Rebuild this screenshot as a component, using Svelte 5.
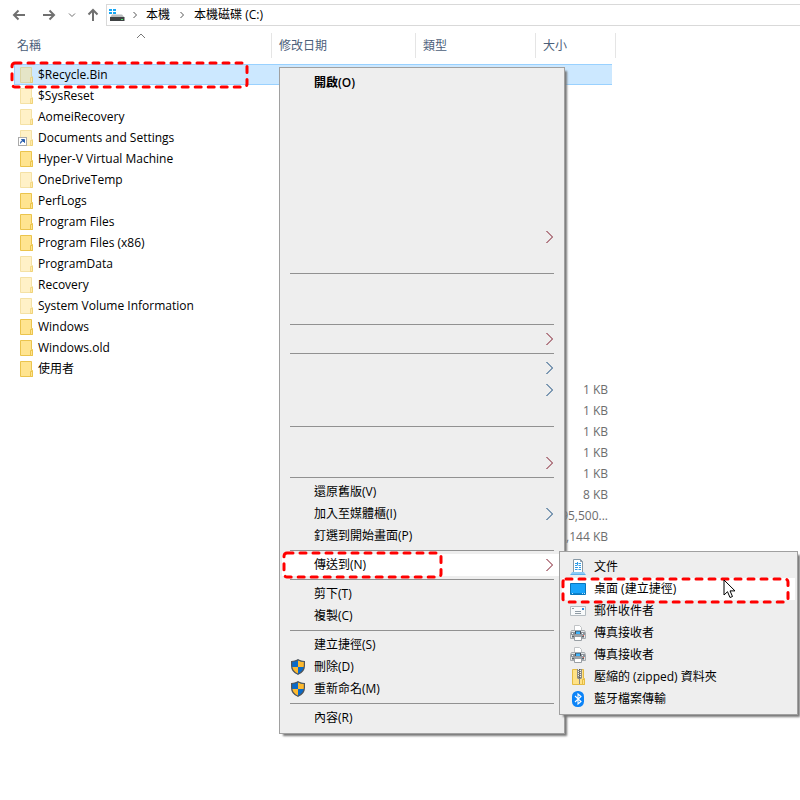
<script>
  const files = [
    ['$Recycle.Bin', 'faded'], ['$SysReset', 'faded'], ['AomeiRecovery', 'faded'],
    ['Documents and Settings', 'faded', true], ['Hyper-V Virtual Machine', ''],
    ['OneDriveTemp', 'faded'], ['PerfLogs', ''], ['Program Files', ''],
    ['Program Files (x86)', ''], ['ProgramData', 'faded'], ['Recovery', 'faded'],
    ['System Volume Information', 'faded'], ['Windows', ''], ['Windows.old', ''], ['使用者', '']
  ];
  const sizes = ['1 KB', '1 KB', '1 KB', '1 KB', '1 KB', '8 KB', '95,500...', '2,144 KB'];

  const blank = (n) => Array.from({ length: n }, () => ({}));
  const groups = [
    [{ label: '開啟(O)', bold: true }, ...blank(6), { arrow: 'red' }, {}],
    blank(2),
    [{ arrow: 'red' }],
    [{ arrow: 'blue' }, { arrow: 'blue' }, {}],
    [{}, { arrow: 'red' }],
    [{ label: '還原舊版(V)' }, { label: '加入至媒體櫃(I)', arrow: 'blue' }, { label: '釘選到開始畫面(P)' }],
    [{ label: '傳送到(N)', arrow: 'red', active: true }],
    [{ label: '剪下(T)' }, { label: '複製(C)' }],
    [{ label: '建立捷徑(S)' }, { label: '刪除(D)', shield: true }, { label: '重新命名(M)', shield: true }],
    [{ label: '內容(R)' }]
  ];
  const targets = [
    ['doc', '文件'], ['desktop', '桌面 (建立捷徑)'], ['mail', '郵件收件者'], ['fax', '傳真接收者'],
    ['fax', '傳真接收者'], ['zip', '壓縮的 (zipped) 資料夾'], ['bluetooth', '藍牙檔案傳輸']
  ];
</script>

{#snippet folder(faded, link)}
  <svg class="folder" class:faded width="18" height="18" viewBox="0 0 18 18" aria-hidden="true">
    <path d="M2.5 1.5h11v9h1v6h-12z" fill="#ffe490" stroke="#ebc44d" />
    <path d="M12.5 16v-4.500h2v5h-2z" fill="#ffe490" stroke="#ebc44d" />
    {#if link}
      <g class="link">
        <rect x=".5" y="8.500" width="8" height="8" fill="#fff" stroke="#aaa" />
        <path d="M2.500 14.500c0-2 1-3 3-3M3.500 10.500h3v3z" fill="#2a5fae" stroke="#2a5fae" />
      </g>
    {/if}
  </svg>
{/snippet}

{#snippet icon(name)}
  <svg width="16" height="16" viewBox="0 0 16 16" aria-hidden="true">
    {#if name === 'shield'}
      <path d="M8 .5c2 1.300 4.300 1.700 6.500 1.800v4.200c0 4.500-2.500 7.300-6.500 9-4-1.700-6.500-4.500-6.500-9V2.300C3.700 2.200 6 1.800 8 .5z" fill="#0a6ac8" />
      <path d="M8 1.200c2 1.200 4 1.600 6 1.700v5H8z" fill="#fdb92e" />
      <path d="M2 8h6v7C4.500 13.500 2.300 11.200 2 8z" fill="#fdb92e" />
      <path d="M8 .8c2 1.200 4.200 1.600 6.400 1.700v4c0 4.400-2.500 7.200-6.400 8.800-3.900-1.600-6.400-4.400-6.400-8.800v-4C3.800 2.400 6 2 8 .8z" fill="none" stroke="#555" stroke-width="1.200" />
    {:else if name === 'doc'}
      <path d="M3.500 .5h7l2 2V14h-9z" fill="#fff" stroke="#8799a6" />
      <path d="M10.500 .5v2h2" fill="none" stroke="#8799a6" />
      <path d="M5 4.500h2.500M5 6.500h2.500M8.500 4.500h2.500M8.500 6.500h2.500M5 8.500h3M9 8.500h2M5 10.500h2.500M8.500 10.500h2.500M7.500 3v3" stroke="#2e9be6" />
      <path d="M2 13h12l1.500 2.500H.5z" fill="#8ccaf5" />
      <path d="M.5 15.500h15" stroke="#5eb0ec" />
    {:else if name === 'desktop'}
      <path d="M.5 2.500h15v11H.5z" fill="#18a4fa" stroke="#0877bd" />
      <path d="M1 12.500h14" stroke="#0b83cf" />
      <path d="M2 12.500h1M12 12.500h1M14 12.500h1" stroke="#bde7ff" />
    {:else if name === 'mail'}
      <path d="M.5 3.500h15v9H.5z" fill="#f8fafb" stroke="#b3bbc0" />
      <path d="M2 5.500h2M5 8.500h6M5 10.500h6" stroke="#8f9ba4" />
      <path d="M12 5h2v2h-2z" fill="#2691e5" />
    {:else if name === 'fax'}
      <path d="M4.500 .5h5l2 2v4h-7z" fill="#fff" stroke="#c0c3c5" />
      <path d="M1.500 5.500h13l1 2v6H.5v-6z" fill="#e3e6e8" stroke="#a5aaae" />
      <path d="M1 7h4v3H1zM11 7h4v3h-4z" fill="#8c949b" />
      <path d="M2 8h1v1H2zM12 8h1v1h-1z" fill="#fff" />
      <path d="M5 6h6v3.500H5z" fill="#46515c" />
      <path d="M6 6.500h4V9H6z" fill="#40b4fb" />
      <path d="M2 10.500h12v2H2z" fill="#5c646b" />
      <path d="M4.500 11.500h7v4h-7z" fill="#fff" stroke="#999fa4" />
      <path d="M13 10h1v1h-1z" fill="#e75c4b" />
    {:else if name === 'zip'}
      <path d="M2.500 .5h11v9h1v6h-12z" fill="#ffe286" stroke="#e4bb43" />
      <path d="M12.500 15v-4.500h2v5h-2z" fill="#ffe286" stroke="#e4bb43" />
      <path d="M7 0h5v9l-1 1H8l-1-1z" fill="#8b8b86" />
      <path d="M8.500 0v8M10.500 1v8" stroke="#eee" stroke-dasharray="1 1" />
      <path d="M9.500 0v9" stroke="#555" stroke-dasharray="1 1" />
      <path d="M9.500 10v5" stroke="#898989" />
    {:else}
      <rect x="2" width="12" height="16" rx="5.500" fill="#0c83f7" />
      <path d="M5 5l6 5.500-3 2.500V3l3 2.500L5 11" fill="none" stroke="#fff" stroke-width="1.100" />
    {/if}
  </svg>
{/snippet}

{#snippet marker()}
  <svg class="marker" aria-hidden="true"><rect x="2" y="2" rx="3" /></svg>
{/snippet}

<main>
  <nav class="toolbar" aria-label="導覽">
    <button aria-label="上一頁"><svg width="14" height="14" viewBox="0 0 14 14"><path d="M13 7H2M6.500 2.500L2 7l4.500 4.500" /></svg></button>
    <button aria-label="下一頁"><svg width="14" height="14" viewBox="0 0 14 14"><path d="M1 7h11M7.500 2.500L12 7l-4.500 4.500" /></svg></button>
    <button class="recent" aria-label="最近的位置"><svg width="8" height="8" viewBox="0 0 8 8"><path d="M1 2.500l3 3 3-3" /></svg></button>
    <button class="up" aria-label="上移"><svg width="14" height="14" viewBox="0 0 14 14"><path d="M7 13V2M2.500 6.500L7 2l4.500 4.500" /></svg></button>
    <div class="address">
      <svg class="drive" width="16" height="14" viewBox="0 0 16 14" aria-hidden="true">
        <path d="M0 1h3v2H0zM4 1h3v2H4zM0 4h3v2H0zM4 4h3v2H4z" fill="#16a6f5" />
        <path d="M3 6.500h10l2.500 3H1z" fill="#b9bcbe" />
        <path d="M1 9h14.500v4H1z" fill="#3f4244" />
        <path d="M12 11h2v1h-2z" fill="#52e26a" />
      </svg>
      <svg class="crumb" width="8" height="8" viewBox="0 0 8 8" aria-hidden="true"><path d="M2.500 1L5.500 4l-3 3" /></svg>
      <a href="#pc">本機</a>
      <svg class="crumb" width="8" height="8" viewBox="0 0 8 8" aria-hidden="true"><path d="M2.500 1L5.500 4l-3 3" /></svg>
      <a href="#c">本機磁碟 (C:)</a>
    </div>
  </nav>

  <table>
    <thead>
      <tr>
        <th class="name">名稱<svg class="sort" width="10" height="6" viewBox="0 0 10 6" aria-hidden="true"><path d="M1 5l4-4 4 4" /></svg></th>
        <th class="date">修改日期</th>
        <th class="type">類型</th>
        <th class="size">大小</th>
      </tr>
    </thead>
    <tbody>
      {#each files as [name, tone, link], i}
        <tr class:selected={i === 0}>
          <td><div class="file">{@render folder(tone === 'faded', link)}<span>{name}</span>{#if i === 0}{@render marker()}{/if}</div></td>
          <td></td><td></td><td></td>
        </tr>
      {/each}
      {#each sizes as size}
        <tr><td></td><td></td><td></td><td class="amount">{size}</td></tr>
      {/each}
    </tbody>
  </table>

  <div class="menu context" role="menu">
    {#each groups as group, g}
      {#if g > 0}<hr />{/if}
      {#each group as item}
        <div class="entry">
          <button class="item" class:bold={item.bold} class:active={item.active} role="menuitem" aria-label={item.label ?? '選項'}>
            <span class="slot">{#if item.shield}{@render icon('shield')}{/if}</span>
            <span class="label">{item.label ?? ''}</span>
            {#if item.arrow}
              <svg class="arrow {item.arrow}" width="8" height="14" viewBox="0 0 8 14" aria-hidden="true"><path d="M.5 1l6 6-6 6" /></svg>
            {/if}
          </button>
          {#if item.active}
            {@render marker()}
            <div class="menu sub" role="menu">
              {#each targets as [kind, label], i}
                <div class="entry">
                  <button class="item" class:active={i === 1} role="menuitem">
                    <span class="slot">{@render icon(kind)}</span>
                    <span class="label">{label}</span>
                  </button>
                  {#if i === 1}
                    {@render marker()}
                    <svg class="cursor" width="13" height="20" viewBox="0 0 13 20" aria-hidden="true">
                      <path d="M1 1v15l3.500-3.300L7 18.500l2.500-1-2.500-5.600h5z" />
                    </svg>
                  {/if}
                </div>
              {/each}
            </div>
          {/if}
        </div>
      {/each}
    {/each}
  </div>
</main>

<style>
  :global(body) { margin: 0; background: #fff; }
  main {
    position: relative;
    min-height: 100vh;
    overflow: hidden;
    font: 12px/20px "Open Sans", "Noto Sans CJK TC", sans-serif;
    color: #000;
  }
  svg { flex: none; }
  button { border: 0; padding: 0; background: none; font: inherit; color: inherit; text-align: left; }
  .toolbar { display: flex; align-items: center; padding-top: 4px; padding-left: 12px; }
  .toolbar button { display: flex; width: 14px; margin-right: 16px; }
  .toolbar button.recent { width: 8px; margin-right: 10px; margin-left: -4px; }
  .toolbar button.up { margin-right: 6px; }
  .toolbar button path { fill: none; stroke: #707070; stroke-width: 2; }
  .toolbar button.recent path { stroke-width: 1; }
  .address {
    display: flex; flex: 1; align-items: center;
    height: 20px; padding-left: 2px;
    border: 1px solid #d9d9d9; border-right: 0;
  }
  .crumb { margin: 0 7px 0 6px; }
  .crumb path { fill: none; stroke: #555; }
  .address a { color: inherit; text-decoration: none; }
  .address a + .crumb { margin: 0 8px; }

  table { width: 602px; margin: 7px 0 0 14px; border-collapse: separate; border-spacing: 0; table-layout: fixed; }
  th {
    position: relative; box-sizing: border-box; height: 25px; padding: 1px 0 0 7px;
    border-right: 1px solid #e5e5e5;
    color: #4c607a; font-weight: 400; text-align: left;
  }
  th.name { width: 258px; padding-left: 3px; }
  th.date { width: 144px; }
  th.type { width: 120px; }
  th.size { width: 80px; }
  .sort { position: absolute; top: 0; left: 122px; }
  .sort path { fill: none; stroke: #777; }
  td { height: 21px; padding: 0; }
  tbody::before { content: ""; display: block; height: 6px; }
  .file { position: relative; display: flex; align-items: center; gap: 2px; height: 21px; padding-left: 4px; white-space: nowrap; }
  .selected td {
    background: linear-gradient(#99d1ff 1px, #cce8ff 1px 20px, #99d1ff 20px) no-repeat;
  }
  .selected td:first-child { box-shadow: inset 1px 0 #99d1ff; }
  .selected td:last-child { background-size: calc(100% - 4px) 100%; }
  .faded > path { opacity: .5; }
  .amount { padding-right: 8px; color: #6d6d6d; text-align: right; }

  .menu {
    position: absolute; box-sizing: border-box; padding: 4px 2px;
    border: 1px solid #a0a0a0; background: #eee;
    box-shadow: 3px 3px 2px -1px #777;
  }
  .context { top: 67px; left: 279px; width: 286px; }
  .sub { top: -3px; left: 277px; width: 239px; }
  .entry { position: relative; }
  .item { display: flex; align-items: center; width: 100%; height: 22px; padding-right: 8px; }
  .slot { display: flex; width: 24px; padding-left: 8px; }
  .label { flex: 1; white-space: nowrap; }
  .bold { font-weight: 600; }
  .active { background: #fff; }
  .arrow path { fill: none; stroke-width: 1; }
  .arrow.red path { stroke: #7c1426; }
  .arrow.blue path { stroke: #0d4478; }
  hr { height: 1px; margin: 3px 8px; border: 0; background: #919191; }

  .marker { position: absolute; overflow: visible; pointer-events: none; z-index: 2; }
  .marker rect {
    width: calc(100% - 4px); height: calc(100% - 4px);
    fill: none; stroke: #f00; stroke-width: 3; stroke-dasharray: 6 7; stroke-linecap: round;
  }
  .file .marker { top: -3px; left: -4px; width: 239px; height: 28px; }
  .context .marker { top: -3px; left: 0; width: 161px; height: 28px; }
  .sub .marker { top: -1px; left: -1px; width: 229px; height: 27px; }
  .cursor { position: absolute; z-index: 3; top: 1px; left: 161px; }
  .cursor path { fill: #fff; stroke: #000; }
</style>
